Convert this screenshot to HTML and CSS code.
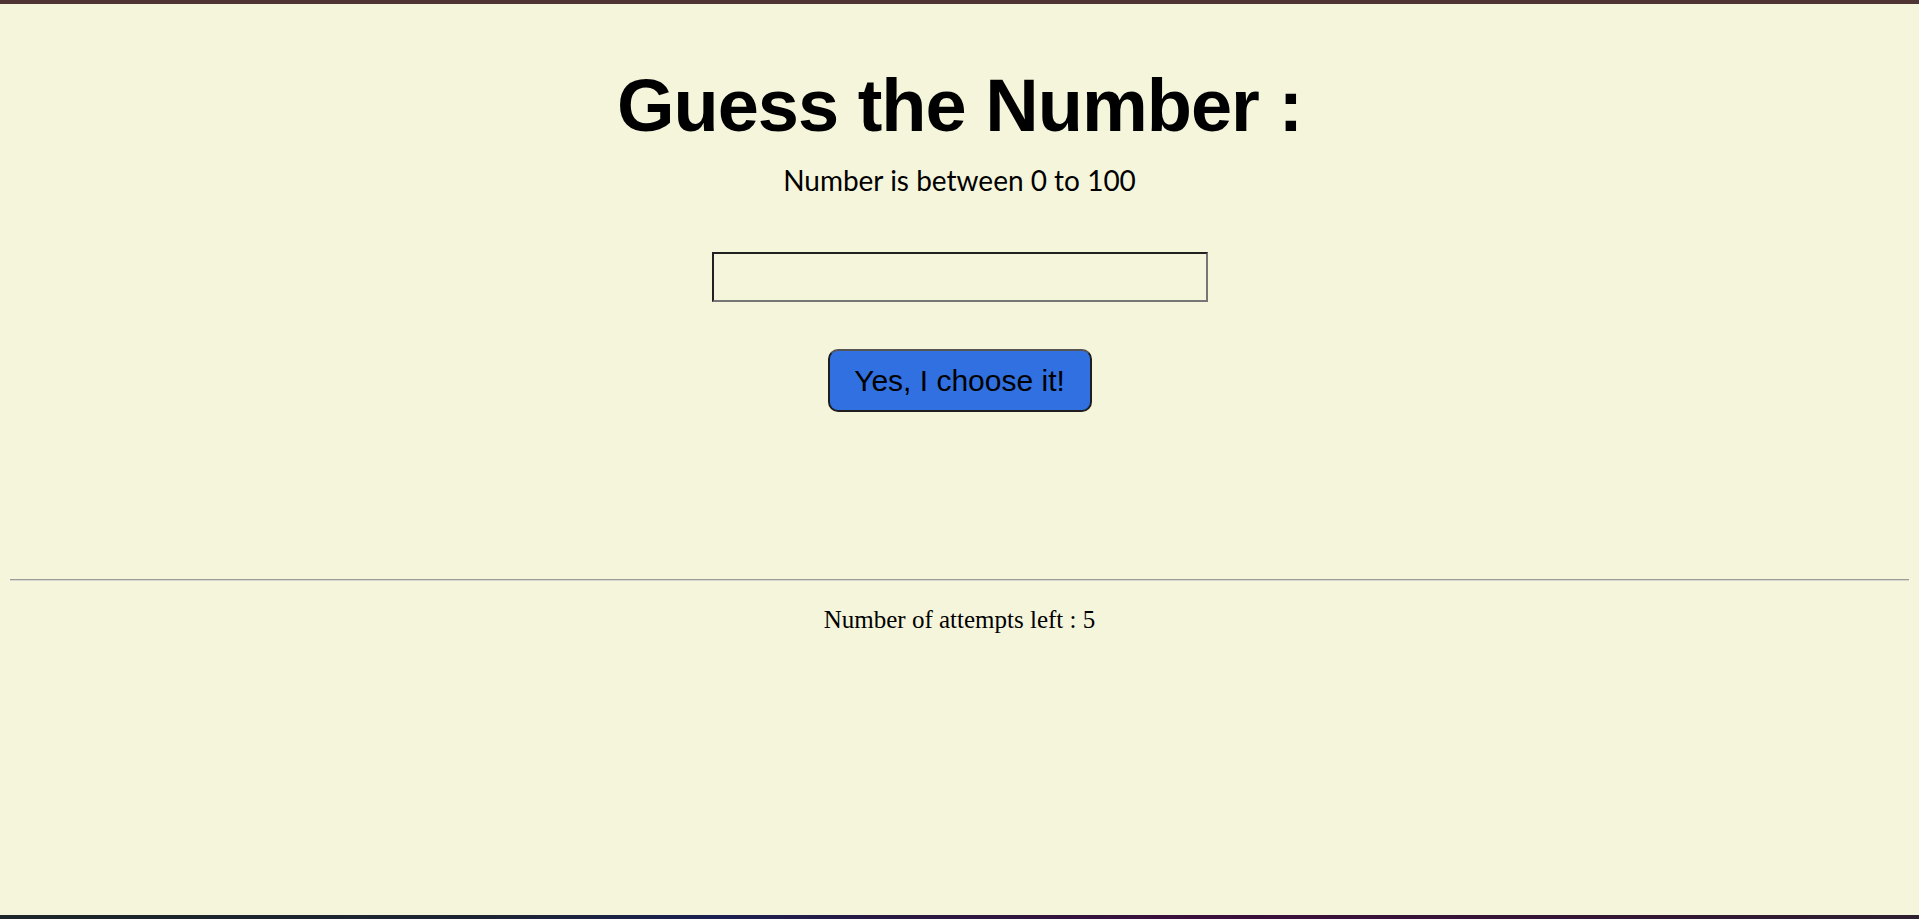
FILE: index.html
```html
<!DOCTYPE html>
<html>
<head>
    <link rel="stylesheet" href="styles.css">
</head>
<body>
    <div class="top-bar"></div>
    <main class="game">
        <h1 class="title">Guess the Number :</h1>
        <p class="hint">Number is between 0 to 100</p>
        <input type="text" class="guess-input" id="guess">
        <button class="guess-btn" onclick="checkGuess()">Yes, I choose it!</button>
        <hr class="divider">
        <p class="attempts" id="message">Number of attempts left : <span id="attempts">5</span></p>
    </main>
    <div class="task-strip"></div>

    <script>
        const secret = Math.floor(Math.random() * 101);
        let attemptsLeft = 5;

        function checkGuess() {
            const value = parseInt(document.getElementById('guess').value, 10);
            const message = document.getElementById('message');
            if (isNaN(value) || attemptsLeft === 0) {
                return;
            }
            attemptsLeft--;
            if (value === secret) {
                message.textContent = 'You got it! The number was ' + secret;
            } else if (attemptsLeft === 0) {
                message.textContent = 'No attempts left. The number was ' + secret;
            } else {
                const hint = value < secret ? 'Too low' : 'Too high';
                message.textContent = hint + ' - Number of attempts left : ' + attemptsLeft;
            }
        }
    </script>
</body>
</html>
```

FILE: styles.css
```css
html, body {
    height: 100%;
}

body {
    margin: 0;
    display: flex;
    flex-direction: column;
    background-color: #f5f5dc;
}

.top-bar {
    height: 4px;
    background-color: #4f3434;
}

.game {
    flex: 1;
    padding: 0 10px;
    text-align: center;
}

.title {
    margin: 60px 0 0;
    font-family: "Liberation Sans", Arial, sans-serif;
    font-size: 74px;
    line-height: 84px;
    font-weight: bold;
    letter-spacing: -1px;
    color: #000;
}

.hint {
    margin: 15px 0 0;
    font-family: Lato, "Open Sans", sans-serif;
    font-size: 28px;
    line-height: 34px;
    color: #000;
}

.guess-input {
    display: block;
    box-sizing: border-box;
    width: 496px;
    height: 50px;
    margin: 55px auto 0;
    background: transparent;
    border: 2px inset #767676;
    font-size: 22px;
}

.guess-btn {
    display: block;
    box-sizing: border-box;
    width: 264px;
    height: 63px;
    margin: 47px auto 0;
    padding: 0;
    font-family: "Liberation Sans", Arial, sans-serif;
    font-size: 30px;
    color: #000;
    background-color: #3170e0;
    border: 2px solid #1f1f1f;
    border-top-color: #555;
    border-radius: 10px;
    cursor: pointer;
}

.divider {
    height: 0;
    margin: 167px 0 0;
    border: 0;
    border-top: 1px solid #9b9b9b;
    border-bottom: 1px solid #d8d8cc;
}

.attempts {
    margin: 25px 0 0;
    font-family: "Liberation Serif", "Times New Roman", serif;
    font-size: 25px;
    line-height: 28px;
    color: #000;
}

.task-strip {
    height: 4px;
    background: linear-gradient(90deg, #1c2528 0%, #1c2432 25%, #1b2050 37%, #2a1840 48%, #3b0f3c 62%, #331633 85%, #2d2030 100%);
}
```
